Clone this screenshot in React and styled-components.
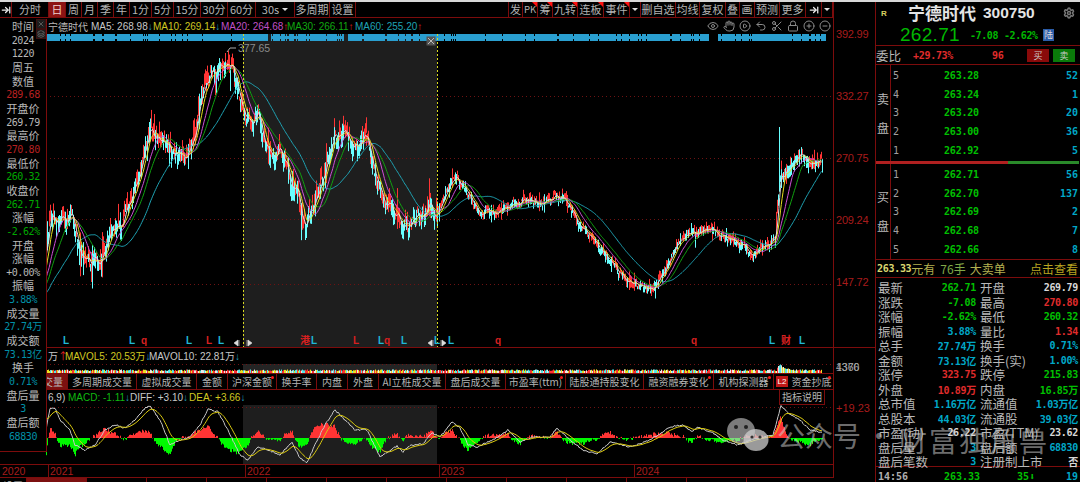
import React from 'react'
import styled, { createGlobalStyle } from 'styled-components'
import { ArrowRightToLine, Eye, Hand, CirclePlay, Undo2, Scissors, Lock, CirclePlus, CircleMinus, Settings, X, Layers } from 'lucide-react'

const LINE = '#7c0c0c'
const CJK = '"Noto Sans CJK SC", "Liberation Sans", sans-serif'
const MONO = '"DejaVu Sans Mono", "Noto Sans CJK SC", monospace'
const SANS = '"Liberation Sans", "Noto Sans CJK SC", sans-serif'

const Global = createGlobalStyle`
    html, body { margin: 0; background: #000; }
    * { box-sizing: border-box; }
`

const Screen = styled.div`
    position: relative;
    display: flex;
    width: 1080px;
    height: 482px;
    overflow: hidden;
    background: #000;
    border-top: 2px solid #d8d8d8;
    font-family: ${CJK};
    color: #b8b8b8;
`

const MainCol = styled.div`
    width: 875px;
    flex: none;
    display: flex;
    flex-direction: column;
`

/* toolbar */
const Toolbar = styled.div`
    display: flex;
    justify-content: space-between;
    width: 834px;
    height: 16px;
    flex: none;
    border-bottom: 1px solid ${LINE};
    border-right: 1px solid ${LINE};
`
const ToolGroup = styled.div`
    display: flex;
`
const ToolBtn = styled.div`
    position: relative;
    width: ${p => p.$w}px;
    display: flex;
    align-items: center;
    justify-content: center;
    gap: 3px;
    border-right: 1px solid ${LINE};
    font-size: ${p => (p.$small ? '9.5px' : '11px')};
    line-height: 1;
    white-space: nowrap;
    color: ${p => (p.$active ? '#f0d0d0' : '#b4b4b4')};
    background: ${p => (p.$active ? '#8c1414' : 'transparent')};
    &:first-child { border-left: ${p => (p.$edge ? `1px solid ${LINE}` : 'none')}; }
    ${p => p.$flag && `
        &::after {
            content: '';
            position: absolute;
            top: 0;
            right: 0;
            border-top: 5px solid #ff1010;
            border-left: 5px solid transparent;
        }
    `}
`
const Caret = styled.span`
    width: 0;
    height: 0;
    border-left: 3px solid transparent;
    border-right: 3px solid transparent;
    border-top: 3px solid #ddd;
`

/* chart stack */
const ChartStack = styled.div`
    position: relative;
    flex: 1;
    display: flex;
    flex-direction: column;
`
const Tip = styled.div`
    position: absolute;
    left: 0;
    top: 1px;
    z-index: 3;
    width: 47px;
    height: 433px;
    padding-top: 1px;
    background: #000;
    border-right: 1px solid ${LINE};
    border-bottom: 1px solid ${LINE};
`
const TipRow = styled.div`
    height: 13.66px;
    line-height: 13.66px;
    text-align: center;
    white-space: nowrap;
    font-family: ${p => (p.$num ? MONO : CJK)};
    font-size: ${p => (p.$num ? '10px' : '11px')};
    letter-spacing: ${p => (p.$num ? '-0.4px' : '0')};
    color: ${p => p.$c || '#b8b8b8'};
`
const TipIcon = styled.div`
    position: absolute;
    right: 0;
    top: ${p => p.$top}px;
    width: 10px;
    height: 10px;
    display: flex;
    align-items: center;
    justify-content: center;
    background: #1c1c1c;
    border: 1px solid #3a1010;
    color: #777;
`

const PriceRow = styled.div`
    display: flex;
    height: 329px;
    flex: none;
    padding-left: 46px;
`
const PricePane = styled.div`
    width: 787px;
    flex: none;
    display: flex;
    flex-direction: column;
`
const Legend = styled.div`
    display: flex;
    align-items: center;
    height: 16px;
    flex: none;
    padding-left: 2px;
    font-family: ${SANS};
    font-size: 10px;
    white-space: nowrap;
`
const LegendItem = styled.span`
    width: ${p => p.$w}px;
    flex: none;
    color: ${p => p.$c};
    font-family: ${p => (p.$cjk ? CJK : SANS)};
`
const Arrow = styled.span`
    color: ${p => (p.$up ? '#e02020' : '#20a0c0')};
`
const ChartIcons = styled.div`
    margin-left: auto;
    display: flex;
    gap: 4px;
    padding-right: 2px;
    color: #8a8a8a;
`
const Axis = styled.div`
    width: 42px;
    flex: none;
    border-left: 1px solid ${LINE};
    padding-top: 10px;
    display: flex;
    flex-direction: column;
`
const AxisTick = styled.div`
    height: 62px;
    padding-left: 2px;
    font: 11px/12px ${SANS};
    letter-spacing: -0.2px;
    color: #a81c1c;
`
const ChartSvg = styled.svg`
    display: block;
    flex: none;
    background: #000;
`

const VolRow = styled.div`
    display: flex;
    height: 26px;
    flex: none;
    padding-left: 46px;
    border-top: 1px solid ${LINE};
`
const VolAxis = styled.div`
    position: relative;
    width: 42px;
    flex: none;
    border-left: 1px solid ${LINE};
    font: 10.5px/10px ${SANS};
    color: #a0a0a0;
`
const Overprint = styled.span`
    position: absolute;
    left: 2px;
    top: 14px;
`
const SubLegend = styled(Legend)`
    height: 15px;
`

const Tabs = styled.div`
    display: flex;
    width: 834px;
    height: 17px;
    flex: none;
    border-top: 1px solid ${LINE};
    border-bottom: 1px solid ${LINE};
`
const Tab = styled.div`
    position: relative;
    width: ${p => p.$w}px;
    flex: none;
    display: flex;
    align-items: center;
    justify-content: ${p => (p.$active ? 'flex-end' : 'center')};
    padding-right: ${p => (p.$active ? '4px' : '0')};
    gap: 3px;
    border-right: 1px solid ${LINE};
    background: ${p => (p.$active ? '#7c1010' : 'transparent')};
    font-size: 10px;
    line-height: 1;
    white-space: nowrap;
    color: #b4b4b4;
    ${p => p.$dot && `
        &::after {
            content: '';
            position: absolute;
            right: 2px;
            top: 2px;
            width: 3px;
            height: 3px;
            border-radius: 50%;
            background: #ff1818;
        }
    `}
`
const L2 = styled.span`
    padding: 1px 2px;
    background: #c01818;
    color: #fff;
    font: 8px/9px ${SANS};
`

const MacdRow = styled.div`
    display: flex;
    height: 74px;
    flex: none;
    padding-left: 46px;
`
const MacdAxis = styled.div`
    width: 42px;
    flex: none;
    border-left: 1px solid ${LINE};
    padding: 12px 0 0 2px;
    font: 11px/12px ${SANS};
    color: #a81c1c;
`
const HelpBtn = styled.div`
    margin-left: auto;
    margin-right: 8px;
    width: 46px;
    height: 15px;
    text-align: center;
    font: 10px/14px ${CJK};
    color: #b4b4b4;
    border-left: 1px solid ${LINE};
    border-right: 1px solid ${LINE};
    border-bottom: 1px solid ${LINE};
`

const TimeAxis = styled.div`
    display: grid;
    grid-template-columns: 48px 197px 194px 195px 200px;
    width: 834px;
    height: 14px;
    flex: none;
    border-top: 1px solid ${LINE};
    border-bottom: 1px solid ${LINE};
    border-right: 1px solid ${LINE};
`
const Year = styled.div`
    padding-left: 1px;
    border-left: 1px solid ${p => (p.$first ? 'transparent' : LINE)};
    font: 10.5px/13px ${SANS};
    color: #a81c1c;
`
const BottomStrip = styled.div`
    display: flex;
    height: 4px;
    overflow: hidden;
`
const BottomCell = styled.div`
    width: ${p => p.$w}px;
    flex: none;
    border-right: 1px solid ${LINE};
    background: ${p => (p.$active ? '#7c1010' : 'transparent')};
    font-size: 10px;
    line-height: 15px;
    text-align: center;
`

/* right panel */
const Panel = styled.div`
    width: 205px;
    flex: none;
    display: flex;
    flex-direction: column;
    border-left: 1px solid ${LINE};
`
const Head = styled.div`
    position: relative;
    height: 44px;
    flex: none;
    border-bottom: 1px solid ${LINE};
`
const HeadTitle = styled.div`
    display: flex;
    align-items: center;
    height: 22px;
    padding-left: 5px;
`
const RMark = styled.span`
    width: 27px;
    font: bold 8px ${SANS};
    color: #d8d060;
`
const StockName = styled.span`
    font: bold 17px/20px ${CJK};
    color: #e4e4e4;
`
const StockCode = styled.span`
    margin-left: 7px;
    font: bold 15.5px/20px ${SANS};
    color: #e4e4e4;
`
const GearWrap = styled.span`
    margin-left: auto;
    margin-right: 5px;
    color: #777;
    display: flex;
`
const QuoteRow = styled.div`
    display: flex;
    align-items: center;
    height: 22px;
    padding-left: 24px;
    color: #00b800;
`
const BigPrice = styled.span`
    width: 70px;
    font: 19px/20px ${SANS};
    letter-spacing: 0.3px;
`
const Delta = styled.span`
    width: ${p => p.$w}px;
    font: bold 10px ${MONO};
    letter-spacing: -0.4px;
`
const LuBadge = styled.span`
    width: 11px;
    height: 12px;
    background: #2a5ca8;
    color: #ddd;
    font-size: 9px;
    line-height: 12px;
    text-align: center;
`
const RatioRow = styled.div`
    display: flex;
    align-items: center;
    height: 19px;
    flex: none;
    padding-left: 0;
    border-bottom: 1px solid ${LINE};
`
const RatioLabel = styled.span`
    width: 37px;
    font-size: 12.5px;
`
const RatioVal = styled.span`
    width: ${p => p.$w}px;
    font: bold 10px ${MONO};
    letter-spacing: -0.3px;
    color: #e02c2c;
`
const TradeBtn = styled.span`
    width: 22px;
    height: 13px;
    margin-right: 4px;
    background: ${p => p.$bg};
    color: #ccc;
    font-size: 9px;
    line-height: 13px;
    text-align: center;
`
const Side = styled.div`
    display: flex;
    height: ${p => p.$h}px;
    flex: none;
`
const SideLabel = styled.div`
    width: 15px;
    flex: none;
    display: flex;
    flex-direction: column;
    justify-content: center;
    gap: 15px;
    align-items: center;
    border-right: 1px solid ${LINE};
    font-size: 12px;
    line-height: 14px;
`
const BookRows = styled.div`
    flex: 1;
    padding-top: 1px;
`
const BookRow = styled.div`
    display: grid;
    grid-template-columns: 51px 1fr 50px;
    height: 18.75px;
    padding: 0 2px;
    align-items: center;
    font: 10px ${MONO};
`
const Level = styled.span`
    color: #a0a0a0;
`
const BookPrice = styled.span`
    color: #00c000;
    font-weight: bold;
    letter-spacing: -0.2px;
`
const BookQty = styled.span`
    color: #00a8c8;
    font-weight: bold;
    text-align: right;
`
const SplitBar = styled.div`
    display: flex;
    height: 3px;
    flex: none;
    background: #000;
`
const SplitPart = styled.div`
    width: ${p => p.$w}px;
    background: ${p => p.$c};
`
const AdRow = styled.div`
    display: flex;
    align-items: center;
    height: 19px;
    flex: none;
    padding: 0 2px 0 1px;
    border-top: 1px solid ${LINE};
    border-bottom: 1px solid ${LINE};
    font-size: 12px;
    white-space: nowrap;
    color: #b4b050;
`
const AdPrice = styled.span`
    font: bold 10px ${MONO};
    letter-spacing: -0.3px;
    color: #dcd870;
`
const AdQty = styled.span`
    margin-left: 5px;
    margin-right: 4px;
    color: #80a848;
`
const AdLink = styled.span`
    margin-left: auto;
    color: #b8a420;
`
const Stats = styled.div`
    height: 189px;
    flex: none;
    border-bottom: 1px solid ${LINE};
`
const StatRow = styled.div`
    display: grid;
    grid-template-columns: 98px 98px;
    gap: 4px;
    height: 14.5px;
    padding-left: 2px;
`
const StatCell = styled.div`
    display: flex;
    justify-content: space-between;
    align-items: center;
    white-space: nowrap;
    font-size: 12.5px;
`
const StatVal = styled.span`
    font: bold 10px ${MONO};
    letter-spacing: -0.3px;
    color: ${p => p.$c};
`
const Foot = styled.div`
    display: grid;
    grid-template-columns: 66px 73px 38px 1fr;
    padding: 3px 2px 0;
    font: bold 10px/14px ${MONO};
    color: #00c000;
`
const FootTime = styled.span`
    color: #b0b0b0;
`
const FootEnd = styled.span`
    color: #00a8c8;
    text-align: right;
`

/* watermark */
const Watermark = styled.div`
    position: absolute;
    left: 727px;
    top: 414px;
    z-index: 5;
    display: flex;
    align-items: center;
    height: 38px;
    color: rgba(205, 205, 205, 0.55);
    white-space: nowrap;
    pointer-events: none;
`
const MarkWords = styled.span`
    margin-left: ${p => p.$ml}px;
    margin-top: ${p => p.$mt || 0}px;
    font-size: 28px;
    line-height: 38px;
    letter-spacing: ${p => p.$ls}px;
`

/* data, everything below is in page pixels */
function seeded(a) {
    return () => {
        a |= 0; a = (a + 0x6d2b79f5) | 0
        let t = Math.imul(a ^ (a >>> 15), 1 | a)
        t = (t + Math.imul(t ^ (t >>> 7), 61 | t)) ^ t
        return ((t ^ (t >>> 14)) >>> 0) / 4294967296
    }
}
function interp(pts, x) {
    if (x <= pts[0][0]) return pts[0][1]
    for (let i = 1; i < pts.length; i++) {
        if (x <= pts[i][0]) {
            const [x0, y0] = pts[i - 1]
            const [x1, y1] = pts[i]
            return y0 + ((y1 - y0) * (x - x0)) / (x1 - x0)
        }
    }
    return pts[pts.length - 1][1]
}

const PRICE = [
    [-60, 310], [20, 300], [40, 280], [46, 250], [50, 215], [62, 220], [72, 218], [80, 250], [90, 262], [100, 258],
    [110, 235], [120, 225], [130, 205], [140, 175], [150, 130], [160, 135], [170, 152], [180, 155], [190, 150],
    [195, 130], [205, 90], [215, 68], [225, 62], [232, 72], [240, 100], [250, 125], [258, 115], [265, 140],
    [275, 150], [285, 160], [295, 190], [305, 225], [315, 205], [325, 170], [335, 135], [345, 135], [355, 150],
    [365, 132], [375, 170], [385, 195], [395, 215], [410, 225], [425, 215], [440, 205], [455, 175], [465, 190],
    [480, 215], [495, 210], [510, 205], [525, 200], [540, 205], [555, 195], [570, 205], [580, 225], [595, 245],
    [610, 260], [625, 280], [640, 285], [650, 290], [665, 270], [680, 240], [695, 235], [710, 228], [725, 240],
    [740, 245], [750, 255], [765, 245], [775, 240], [780, 180], [790, 170], [800, 155], [810, 165], [820, 160],
]
const DX = 0.82
const END_X = 822
// single long wicks that stand out in the picture
const WICKS = [[779, 127, 'high'], [91, 282, 'low'], [305, 240, 'low'], [651, 296, 'low'], [225, 53, 'high']]

function buildBars() {
    const r = seeded(7)
    const bars = []
    let n = 0
    for (let x = -60; x <= END_X; x += DX) {
        const vol = x < 440 ? 9.5 : x < 770 ? 4.6 : 7
        n = 0.7 * n + (r() - 0.5) * vol * 1.1
        const close = interp(PRICE, x) + n
        const open = close + (r() - 0.5) * vol * 1.8
        const tall = r() > 0.9 ? 2.2 : 1
        const high = Math.min(open, close) - r() * vol * tall
        const low = Math.max(open, close) + r() * vol * tall
        bars.push({ x, open, close, high, low })
    }
    WICKS.forEach(([x, y, key]) => {
        const b = BARS_AT(bars, x)
        b[key] = y
    })
    return bars
}
function BARS_AT(bars, x) {
    return bars[Math.round((x + 60) / DX)]
}
const BARS = buildBars()

function maPath(win) {
    let d = ''
    let sum = 0
    BARS.forEach((b, i) => {
        sum += b.close
        if (i >= win) sum -= BARS[i - win].close
        if (i >= win && b.x >= 44) d += `${d ? 'L' : 'M'}${b.x.toFixed(1)} ${(sum / win).toFixed(1)}`
    })
    return d
}
function candlePath(up) {
    let d = ''
    BARS.forEach(b => {
        if (b.x < 46 || (b.close < b.open) !== up) return
        d += `M${Math.round(b.x) + 0.5} ${b.high.toFixed(1)}V${b.low.toFixed(1)}`
    })
    return d
}
function bandPath() {
    const r = seeded(21)
    let d = ''
    for (let x = 46; x < 826; x += 1) {
        if ((x > 267 && x < 271) || (x > 343 && x < 348) || (x > 708 && x < 718)) continue
        const h = r() > 0.12 ? 3.5 : 1.5
        d += `M${x + 0.5} ${37.5 - h}V${37.5 + h}`
    }
    return d
}

const MA_LINES = [
    { win: 60, c: '#1fa3b4' },
    { win: 30, c: '#10a010' },
    { win: 20, c: '#d050d8' },
    { win: 10, c: '#e8e020' },
    { win: 5, c: '#e0e0e0' },
].map(m => ({ ...m, d: maPath(m.win) }))

const MARKS = [
    [66, 'L', 1], [132, 'L', 1], [144, 'q', 0], [189, 'L', 1], [209, 'L', 0], [221, 'L', 1], [305, '港', 0], [314, 'L', 1],
    [356, 'L', 0], [381, 'L', 1], [387, 'q', 0], [404, 'L', 1], [437, 'L', 1], [451, 'L', 1], [498, 'q', 0],
    [694, 'q', 0], [772, 'L', 1], [786, '财', 0], [802, 'L', 1],
]

const DIFF = [
    [46, 430], [50, 408], [55, 408], [60, 420], [70, 430], [75, 445], [85, 450], [95, 445], [105, 430], [115, 425],
    [125, 428], [135, 420], [145, 408], [150, 406], [160, 420], [170, 445], [180, 440], [190, 437], [200, 425],
    [208, 409], [218, 412], [228, 430], [240, 455], [248, 460], [258, 447], [268, 450], [280, 455], [292, 442],
    [300, 458], [307, 463], [315, 445], [325, 425], [335, 410], [345, 420], [355, 430], [367, 430], [380, 457],
    [397, 446], [403, 452], [410, 445], [423, 444], [432, 433], [440, 437], [452, 422], [460, 428], [468, 445],
    [477, 447], [493, 440], [508, 430], [520, 442], [533, 437], [550, 437], [557, 428], [570, 440], [583, 450],
    [597, 454], [610, 442], [630, 447], [650, 440], [670, 427], [683, 425], [692, 432], [698, 427], [713, 433],
    [723, 440], [737, 445], [757, 438], [773, 435], [781, 406], [788, 413], [800, 420], [810, 430], [820, 432],
]
const ZERO = 438

function buildMacd() {
    const r = seeded(5)
    let dea = 415
    let diffD = ''
    let deaD = ''
    let redD = ''
    let greenD = ''
    for (let x = 46; x <= 822; x += 1) {
        const y = interp(DIFF, x) + (r() - 0.5) * 1.6
        dea += (y - dea) * 0.16
        diffD += `${diffD ? 'L' : 'M'}${x} ${y.toFixed(1)}`
        deaD += `${deaD ? 'L' : 'M'}${x} ${dea.toFixed(1)}`
        const h = Math.max(-20, Math.min(24, (dea - y) * 1.4 + (r() - 0.5) * 3))
        if (h > 0) redD += `M${x + 0.5} ${ZERO}V${(ZERO - h).toFixed(1)}`
        else greenD += `M${x + 0.5} ${ZERO}V${(ZERO - h).toFixed(1)}`
    }
    return { diffD, deaD, redD, greenD }
}
const MACD = buildMacd()

function buildVolume() {
    const r = seeded(11)
    const cols = ['#ff3232', '#54e8e8', '#e8e020', '#e8e8e8']
    const parts = cols.map(() => '')
    for (let x = 46; x < 822; x += 1) {
        const spike = x > 776 && x < 800 ? 5 * Math.exp(-Math.abs(x - 780) / 6) : 0
        const top = 371 - r() * 1.6 - spike
        const k = Math.floor(r() * 4)
        parts[k] += `M${x + 0.5} 373V${top.toFixed(1)}`
    }
    return parts.map((d, i) => ({ d, c: cols[i] }))
}
const VOLUME = buildVolume()

/* content */
const LEFT_TOOLS = [
    [37, '分时'], [17, '日', 1], [16, '周'], [16, '月'], [16, '季'], [16, '年'], [22, '1分'], [22, '5分'], [27, '15分'],
    [27, '30分'], [28, '60分'],
]
const RIGHT_TOOLS = [
    [15, '发'], [15, 'PK', 0, 1], [15, '筹', 0, 1], [25, '九转', 0, 1], [26, '连板', 0, 1], [26, '事件', 0, 1],
]
const RIGHT_TOOLS_2 = [[35, '删自选'], [24, '均线'], [26, '复权'], [14, '叠'], [15, '画'], [25, '预测'], [26, '更多']]

const TIP_ROWS = [
    ['时间'], ['2024', '#b8b8b8', 1], ['1220', '#b8b8b8', 1], ['周五'], ['数值'], ['289.68', '#b82020', 1], ['开盘价'],
    ['269.79', '#b8b8b8', 1], ['最高价'], ['270.80', '#b82020', 1], ['最低价'], ['260.32', '#00a800', 1], ['收盘价'],
    ['262.71', '#00a800', 1], ['涨幅'], ['-2.62%', '#00a800', 1], ['开盘'], ['涨幅'], ['+0.00%', '#b8b8b8', 1], ['振幅'],
    ['3.88%', '#0090a8', 1], ['成交量'], ['27.74万', '#0090a8', 1], ['成交额'], ['73.13亿', '#0090a8', 1], ['换手'],
    ['0.71%', '#0090a8', 1], ['盘后量'], ['3', '#0090a8', 1], ['盘后额'], ['68830', '#0090a8', 1],
]

const TABS = [
    [68, '成交量', 1], [69, '多周期成交量'], [60, '虚拟成交量'], [31, '金额'], [49, '沪深金额', 0, 1], [40, '换手率'], [31, '内盘'],
    [31, '外盘'], [67, 'AI立桩成交量'], [60, '盘后成交量'], [60, '市盈率(ttm)', 0, 1], [78, '陆股通持股变化'],
    [70, '融资融券变化', 0, 1], [60, '机构探测器', 0, 1],
]

const SELL = [[5, '263.28', 52], [4, '263.24', 1], [3, '263.20', 20], [2, '263.00', 36], [1, '262.92', 5]]
const BUY = [[1, '262.71', 56], [2, '262.70', 137], [3, '262.69', 2], [4, '262.68', 7], [5, '262.66', 8]]

const GREEN = '#00c000'
const RED = '#e02c2c'
const CYAN = '#00a8c8'
const WHITE = '#d8d8d8'
const STATS = [
    ['最新', '262.71', GREEN, '开盘', '269.79', WHITE],
    ['涨跌', '-7.08', GREEN, '最高', '270.80', RED],
    ['涨幅', '-2.62%', GREEN, '最低', '260.32', GREEN],
    ['振幅', '3.88%', CYAN, '量比', '1.34', RED],
    ['总手', '27.74万', CYAN, '换手', '0.71%', CYAN],
    ['金额', '73.13亿', CYAN, '换手(实)', '1.00%', CYAN],
    ['涨停', '323.75', RED, '跌停', '215.83', GREEN],
    ['外盘', '10.89万', RED, '内盘', '16.85万', GREEN],
    ['总市值', '1.16万亿', CYAN, '流通值', '1.03万亿', CYAN],
    ['总股本', '44.03亿', CYAN, '流通股', '39.03亿', CYAN],
    ['市盈(动)', '26.22', WHITE, '市盈(TTM)', '23.62', WHITE],
    ['盘后量', '3', CYAN, '盘后额', '68830', CYAN],
    ['盘后笔数', '3', CYAN, '注册制上市', '否', WHITE],
]

const Down = () => <Arrow>↓</Arrow>
const Up = () => <Arrow $up>↑</Arrow>

function PriceChart() {
    return (
        <ChartSvg width="787" height="313" viewBox="46 34 787 313">
            <rect x="243" y="34" width="194" height="313" fill="#1e1e1e" />
            {[96, 158, 219, 284].map(y => (
                <line key={y} x1="46" x2="833" y1={y + 0.5} y2={y + 0.5} stroke="#6e1212" strokeDasharray="1 3" />
            ))}
            <path d={bandPath()} stroke="#2a9fd0" fill="none" />
            <path d={candlePath(false)} stroke="#ff3434" strokeWidth="1" fill="none" />
            <path d={candlePath(true)} stroke="#68ffff" strokeWidth="1" fill="none" />
            {MA_LINES.map(m => (
                <path key={m.win} d={m.d} stroke={m.c} strokeWidth="1" fill="none" />
            ))}
            <line x1="243.5" x2="243.5" y1="34" y2="347" stroke="#d8d820" strokeDasharray="2 2" />
            <line x1="437.5" x2="437.5" y1="34" y2="347" stroke="#d8d820" strokeDasharray="2 2" />
            <path d="M227 52L230 48H236" stroke="#aaa" fill="none" />
            <text x="238" y="52" fontFamily="Liberation Sans" fontSize="10.5" fill="#8c8c8c">377.65</text>
            {MARKS.map(([x, t, cyan]) => (
                <text
                    key={x}
                    x={x}
                    y="344"
                    textAnchor="middle"
                    fontFamily="Liberation Sans, Noto Sans CJK SC"
                    fontWeight="bold"
                    fontSize="10"
                    fill={cyan ? '#20b8d8' : '#d82020'}
                >
                    {t}
                </text>
            ))}
            {[243, 437].map(x => (
                <path key={x} d={`M${x - 9} 343l4 -3v6zM${x - 4} 340v6M${x + 9} 343l-4 -3v6zM${x + 4} 340v6`} fill="#ddd" stroke="#ddd" strokeWidth="0.6" />
            ))}
            <rect x="426.5" y="36.5" width="9" height="9" fill="#555" />
            <path d="M428 38l6 6M434 38l-6 6" stroke="#bbb" />
        </ChartSvg>
    )
}

function VolumeChart() {
    return (
        <ChartSvg width="787" height="10" viewBox="46 363 787 10">
            <rect x="243" y="364" width="194" height="9" fill="#242424" />
            <line x1="46" x2="833" y1="364.5" y2="364.5" stroke="#6e1212" strokeDasharray="1 3" />
            {VOLUME.map(v => (
                <path key={v.c} d={v.d} stroke={v.c} fill="none" />
            ))}
        </ChartSvg>
    )
}

function MacdChart() {
    return (
        <ChartSvg width="787" height="59" viewBox="46 405 787 59">
            <rect x="243" y="405" width="194" height="59" fill="#1e1e1e" />
            <line x1="46" x2="833" y1="407.5" y2="407.5" stroke="#6e1212" strokeDasharray="1 3" />
            <path d={MACD.redD} stroke="#ff3434" fill="none" />
            <path d={MACD.greenD} stroke="#00f800" fill="none" />
            <path d={MACD.diffD} stroke="#c8c8c8" fill="none" />
            <path d={MACD.deaD} stroke="#d8c810" fill="none" />
        </ChartSvg>
    )
}

function WeChatMark() {
    return (
        <svg width="42" height="36" viewBox="0 0 42 36">
            <ellipse cx="14" cy="14" rx="14" ry="13" fill="rgba(205,205,205,0.6)" />
            <circle cx="9" cy="10" r="2" fill="#222" />
            <circle cx="19" cy="10" r="2" fill="#222" />
            <ellipse cx="29" cy="23" rx="12.5" ry="11" fill="rgba(205,205,205,0.75)" />
            <circle cx="25" cy="20" r="1.6" fill="#333" />
            <circle cx="33" cy="20" r="1.6" fill="#333" />
        </svg>
    )
}

function BookSide({ label, rows, height }) {
    return (
        <Side $h={height}>
            <SideLabel>
                <span>{label}</span>
                <span>盘</span>
            </SideLabel>
            <BookRows>
                {rows.map(([lv, p, q]) => (
                    <BookRow key={lv}>
                        <Level>{lv}</Level>
                        <BookPrice>{p}</BookPrice>
                        <BookQty>{q}</BookQty>
                    </BookRow>
                ))}
            </BookRows>
        </Side>
    )
}

function QuotePanel() {
    return (
        <Panel>
            <Head>
                <HeadTitle>
                    <RMark>R</RMark>
                    <StockName>宁德时代</StockName>
                    <StockCode>300750</StockCode>
                    <GearWrap><Settings size={12} strokeWidth={3} /></GearWrap>
                </HeadTitle>
                <QuoteRow>
                    <BigPrice>262.71</BigPrice>
                    <Delta $w={34}>-7.08</Delta>
                    <Delta $w={39}>-2.62%</Delta>
                    <LuBadge>陆</LuBadge>
                </QuoteRow>
            </Head>
            <RatioRow>
                <RatioLabel>委比</RatioLabel>
                <RatioVal $w={79}>+29.73%</RatioVal>
                <RatioVal $w={35}>96</RatioVal>
                <TradeBtn $bg="#8a0a0a">买</TradeBtn>
                <TradeBtn $bg="#0a7a0a">卖</TradeBtn>
            </RatioRow>
            <BookSide label="卖" rows={SELL} height={96} />
            <SplitBar>
                <SplitPart $w={132} $c="#b02020" />
                <SplitPart $w={71} $c="#2a8a2a" />
            </SplitBar>
            <BookSide label="买" rows={BUY} height={95} />
            <AdRow>
                <AdPrice>263.33</AdPrice>元有
                <AdQty>76手</AdQty>大卖单
                <AdLink>点击查看</AdLink>
            </AdRow>
            <Stats>
                {STATS.map(([a, av, ac, b, bv, bc]) => (
                    <StatRow key={a}>
                        <StatCell><span>{a}</span><StatVal $c={ac}>{av}</StatVal></StatCell>
                        <StatCell><span>{b}</span><StatVal $c={bc}>{bv}</StatVal></StatCell>
                    </StatRow>
                ))}
            </Stats>
            <Foot>
                <FootTime>14:56</FootTime>
                <span>263.33</span>
                <span>35⬇</span>
                <FootEnd>19</FootEnd>
            </Foot>
        </Panel>
    )
}

export default function App() {
    return (
        <>
            <Global />
            <Screen>
                <MainCol>
                    <Toolbar>
                        <ToolGroup>
                            <ToolBtn $w={12}><ArrowRightToLine size={10} strokeWidth={3} color="#eee" /></ToolBtn>
                            {LEFT_TOOLS.map(([w, t, active]) => (
                                <ToolBtn key={t} $w={w} $active={active}>{t}</ToolBtn>
                            ))}
                            <ToolBtn $w={39}>30s<Caret /></ToolBtn>
                            <ToolBtn $w={35}>多周期</ToolBtn>
                            <ToolBtn $w={26}>设置</ToolBtn>
                        </ToolGroup>
                        <ToolGroup>
                            {RIGHT_TOOLS.map(([w, t, a, flag]) => (
                                <ToolBtn key={t} $w={w} $flag={flag} $edge $small={t === 'PK'}>{t}</ToolBtn>
                            ))}
                            <ToolBtn $w={11}><Caret /></ToolBtn>
                            {RIGHT_TOOLS_2.map(([w, t]) => (
                                <ToolBtn key={t} $w={w}>{t}</ToolBtn>
                            ))}
                            <ToolBtn $w={16}><ArrowRightToLine size={10} strokeWidth={3} color="#eee" /></ToolBtn>
                            <ToolBtn $w={11}><Caret /></ToolBtn>
                        </ToolGroup>
                    </Toolbar>
                    <ChartStack>
                        <Tip>
                            {TIP_ROWS.map(([t, c, num], i) => (
                                <TipRow key={i} $c={c} $num={num}>{t}</TipRow>
                            ))}
                            <TipIcon $top={0}><X size={8} /></TipIcon>
                            <TipIcon $top={10}><Layers size={8} /></TipIcon>
                        </Tip>
                        <PriceRow>
                            <PricePane>
                                <Legend>
                                    <LegendItem $w={43} $c="#b8b8b8" $cjk>宁德时代</LegendItem>
                                    <LegendItem $w={62} $c="#c8c8c8">MA5: 268.98<Down /></LegendItem>
                                    <LegendItem $w={68} $c="#d0c820">MA10: 269.14<Down /></LegendItem>
                                    <LegendItem $w={66} $c="#c050c8">MA20: 264.68<Up /></LegendItem>
                                    <LegendItem $w={68} $c="#10a810">MA30: 266.11<Up /></LegendItem>
                                    <LegendItem $w={66} $c="#1fa3b4">MA60: 255.20<Up /></LegendItem>
                                    <ChartIcons>
                                        <Eye size={12} />
                                        <Hand size={12} />
                                        <CirclePlay size={12} />
                                        <Undo2 size={12} />
                                        <Scissors size={12} />
                                        <Lock size={12} />
                                        <CirclePlus size={12} />
                                        <CircleMinus size={12} />
                                    </ChartIcons>
                                </Legend>
                                <PriceChart />
                            </PricePane>
                            <Axis>
                                {['392.99', '332.27', '270.75', '209.24', '147.72'].map(t => (
                                    <AxisTick key={t}>{t}</AxisTick>
                                ))}
                            </Axis>
                        </PriceRow>
                        <VolRow>
                            <PricePane>
                                <SubLegend>
                                    <LegendItem $w={17} $c="#c8c8c8" $cjk>万<Up /></LegendItem>
                                    <LegendItem $w={84} $c="#d0c820">MAVOL5: 20.53万<Down /></LegendItem>
                                    <LegendItem $w={90} $c="#c8c8c8">MAVOL10: 22.81万<Down /></LegendItem>
                                </SubLegend>
                                <VolumeChart />
                            </PricePane>
                            <VolAxis>
                                <Overprint>1376</Overprint>
                                <Overprint>4360</Overprint>
                            </VolAxis>
                        </VolRow>
                        <Tabs>
                            {TABS.map(([w, t, active, dot]) => (
                                <Tab key={t} $w={w} $active={active} $dot={dot}>{t}</Tab>
                            ))}
                            <Tab $w={60} $dot><L2>L2</L2>资金抄底</Tab>
                        </Tabs>
                        <MacdRow>
                            <PricePane>
                                <SubLegend>
                                    <LegendItem $w={20} $c="#c8c8c8">6,9)</LegendItem>
                                    <LegendItem $w={62} $c="#10b810">MACD: -1.11<Down /></LegendItem>
                                    <LegendItem $w={59} $c="#c8c8c8">DIFF: +3.10<Down /></LegendItem>
                                    <LegendItem $w={60} $c="#d0c820">DEA: +3.66<Down /></LegendItem>
                                    <HelpBtn>指标说明</HelpBtn>
                                </SubLegend>
                                <MacdChart />
                            </PricePane>
                            <MacdAxis>+19.23</MacdAxis>
                        </MacdRow>
                        <TimeAxis>
                            <Year $first>2020</Year>
                            <Year>2021</Year>
                            <Year>2022</Year>
                            <Year>2023</Year>
                            <Year>2024</Year>
                        </TimeAxis>
                        <BottomStrip>
                            <BottomCell $w={27}>设置</BottomCell>
                            <BottomCell $w={60} $active />
                            <BottomCell $w={60} />
                            <BottomCell $w={60} />
                            <BottomCell $w={60} />
                            <BottomCell $w={60} />
                            <BottomCell $w={60} />
                            <BottomCell $w={60} />
                            <BottomCell $w={60} />
                            <BottomCell $w={60} />
                            <BottomCell $w={60} />
                            <BottomCell $w={60} />
                            <BottomCell $w={60} />
                        </BottomStrip>
                    </ChartStack>
                </MainCol>
                <QuotePanel />
                <Watermark>
                    <WeChatMark />
                    <MarkWords $ml={8} $ls={0}>公众号</MarkWords>
                    <MarkWords $ml={4} $ls={0}>·</MarkWords>
                    <MarkWords $ml={6} $ls={2} $mt={10}>财富独角兽</MarkWords>
                </Watermark>
            </Screen>
        </>
    )
}
